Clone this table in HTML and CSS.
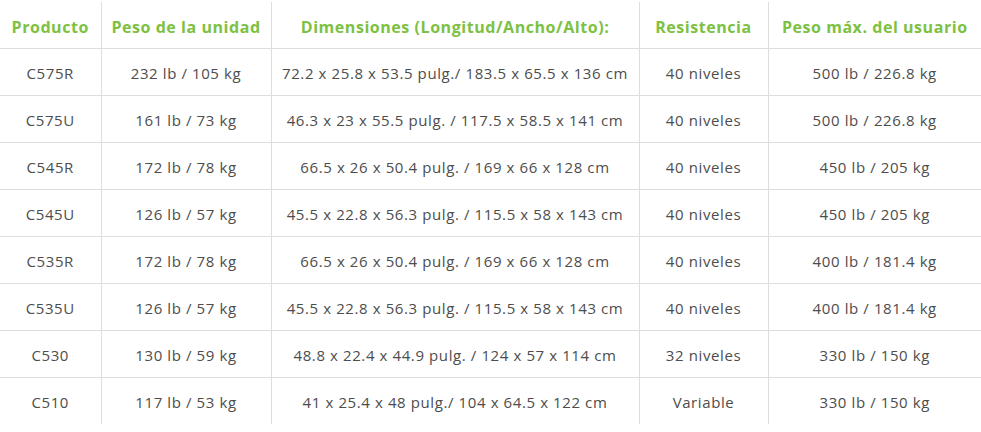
FILE: index.html
```html
<!DOCTYPE html>
<html lang="es">
<head>
<meta charset="utf-8">
<title>Especificaciones</title>
<link rel="stylesheet" href="styles.css">
</head>
<body>
<table class="spec">
  <colgroup>
    <col class="c1"><col class="c2"><col class="c3"><col class="c4"><col class="c5">
  </colgroup>
  <thead>
    <tr>
      <th>Producto</th>
      <th>Peso de la unidad</th>
      <th>Dimensiones (Longitud/Ancho/Alto):</th>
      <th>Resistencia</th>
      <th>Peso máx. del usuario</th>
    </tr>
  </thead>
  <tbody>
    <tr><td>C575R</td><td>232 lb / 105 kg</td><td>72.2 x 25.8 x 53.5 pulg./ 183.5 x 65.5 x 136 cm</td><td>40 niveles</td><td>500 lb / 226.8 kg</td></tr>
    <tr><td>C575U</td><td>161 lb / 73 kg</td><td>46.3 x 23 x 55.5 pulg. / 117.5 x 58.5 x 141 cm</td><td>40 niveles</td><td>500 lb / 226.8 kg</td></tr>
    <tr><td>C545R</td><td>172 lb / 78 kg</td><td>66.5 x 26 x 50.4 pulg. / 169 x 66 x 128 cm</td><td>40 niveles</td><td>450 lb / 205 kg</td></tr>
    <tr><td>C545U</td><td>126 lb / 57 kg</td><td>45.5 x 22.8 x 56.3 pulg. / 115.5 x 58 x 143 cm</td><td>40 niveles</td><td>450 lb / 205 kg</td></tr>
    <tr><td>C535R</td><td>172 lb / 78 kg</td><td>66.5 x 26 x 50.4 pulg. / 169 x 66 x 128 cm</td><td>40 niveles</td><td>400 lb / 181.4 kg</td></tr>
    <tr><td>C535U</td><td>126 lb / 57 kg</td><td>45.5 x 22.8 x 56.3 pulg. / 115.5 x 58 x 143 cm</td><td>40 niveles</td><td>400 lb / 181.4 kg</td></tr>
    <tr><td>C530</td><td>130 lb / 59 kg</td><td>48.8 x 22.4 x 44.9 pulg. / 124 x 57 x 114 cm</td><td>32 niveles</td><td>330 lb / 150 kg</td></tr>
    <tr><td>C510</td><td>117 lb / 53 kg</td><td>41 x 25.4 x 48 pulg./ 104 x 64.5 x 122 cm</td><td>Variable</td><td>330 lb / 150 kg</td></tr>
  </tbody>
</table>
</body>
</html>
```
FILE: styles.css
```css
html, body {
  margin: 0;
  padding: 0;
  background: #ffffff;
}
body {
  padding-top: 2px;
  font-family: "Open Sans", "Lato", sans-serif;
}
.spec {
  width: 981px;
  border-collapse: collapse;
  table-layout: fixed;
}
.c1 { width: 101px; }
.c2 { width: 170px; }
.c3 { width: 368px; }
.c4 { width: 129px; }
.c5 { width: 213px; }
.spec th,
.spec td {
  box-sizing: border-box;
  padding: 0 1px;
  text-align: center;
  vertical-align: middle;
  border-left: 1px solid #dedede;
  white-space: nowrap;
}
.spec th:first-child,
.spec td:first-child {
  border-left: none;
}
.spec th {
  height: 46px;
  padding-top: 4px;
  color: #7dc142;
  font-size: 16px;
  font-weight: 700;
  letter-spacing: 0.55px;
}
.spec td {
  height: 47px;
  color: #4d4d4d;
  font-size: 15px;
  font-weight: 400;
  letter-spacing: 0.6px;
  border-top: 1px solid #dedede;
  padding-top: 2px;
}
```
